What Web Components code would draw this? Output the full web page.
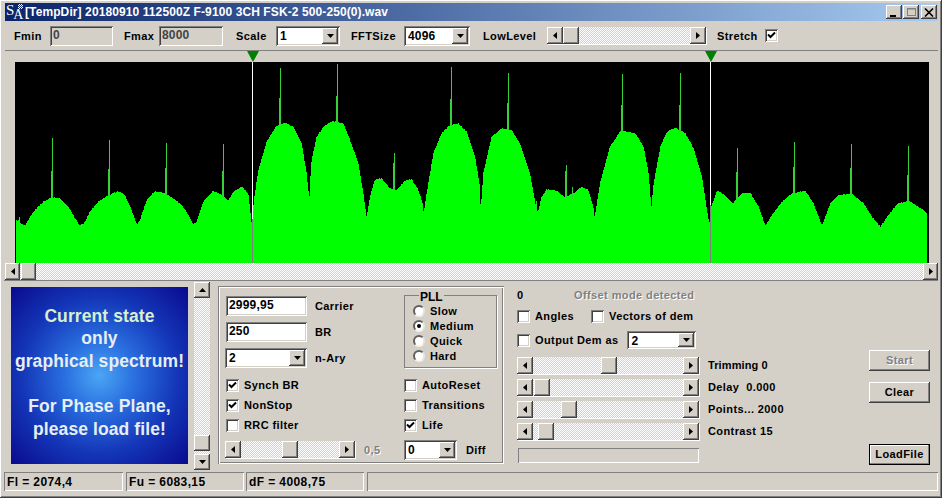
<!DOCTYPE html>
<html><head><meta charset="utf-8"><title>SA</title>
<style>
:root{--face:#d4d0c8;
--raised:inset -1px -1px #404040,inset 1px 1px #fff,inset -2px -2px #808080,inset 2px 2px #d4d0c8;
--sunken:inset 1px 1px #808080,inset -1px -1px #fff,inset 2px 2px #404040,inset -2px -2px #d4d0c8;
--dither:repeating-conic-gradient(#d4d0c8 0 25%,#fff 0 50%) 0 0/2px 2px;}
html,body{margin:0;padding:0;background:var(--face);font:bold 11px "Liberation Sans",Arial,sans-serif;color:#000;letter-spacing:.4px}
</style></head><body>
<ui-window>
  <ui-titlebar>[TempDir] 20180910 112500Z F-9100 3CH FSK-2 500-250(0).wav</ui-titlebar>
  <ui-row style="height:29px;padding-left:9px;border-bottom:1px solid #808080">
    <ui-label style="width:36px">Fmin</ui-label><ui-edit readonly style="width:63px">0</ui-edit>
    <ui-label style="width:35px;margin-left:11px">Fmax</ui-label><ui-edit readonly style="width:64px">8000</ui-edit>
    <ui-label style="width:40px;margin-left:13px">Scale</ui-label><ui-combo style="width:64px">1</ui-combo>
    <ui-label style="width:53px;margin-left:11px">FFTSize</ui-label><ui-combo style="width:66px">4096</ui-combo>
    <ui-label style="width:64px;margin-left:13px">LowLevel</ui-label><ui-scroll thumb="0" style="width:159px"></ui-scroll>
    <ui-label style="width:48px;margin-left:11px">Stretch</ui-label><ui-check checked></ui-check>
  </ui-row>
  <ui-spectrum style="margin-left:10px"></ui-spectrum>
  <ui-scroll thumb="1" plain style="width:933px"></ui-scroll>
  <ui-row style="height:191px;align-items:flex-start;border-top:1px solid #808080;margin-left:-1px;padding-left:1px">
    <ui-banner style="margin:6px 0 0 6px"><span style="color:#d8efd0">Current state</span><br>only<br>graphical spectrum!<br><br>For Phase Plane,<br>please load file!</ui-banner>
    <ui-scroll vertical thumb="137" plain style="margin:1px 0 0 6px;width:16px;height:188px"></ui-scroll>
    <ui-panel style="margin:5px 0 0 8px;width:286px;height:178px">
      <ui-col style="width:179px;padding:10px 0 0 7px;box-sizing:content-box">
        <ui-row style="height:20px"><ui-edit style="width:81px;margin-left:1px">2999,95</ui-edit><ui-label style="margin-left:8px">Carrier</ui-label></ui-row>
        <ui-row style="height:20px;margin-top:6px"><ui-edit style="width:81px;margin-left:1px">250</ui-edit><ui-label style="margin-left:8px">BR</ui-label></ui-row>
        <ui-row style="height:20px;margin-top:6px"><ui-combo style="width:82px">2</ui-combo><ui-label style="margin-left:8px">n-Ary</ui-label></ui-row>
        <ui-check checked style="margin:10px 0 0 1px" label="Synch BR"></ui-check>
        <ui-check checked style="margin:6px 0 0 1px" label="NonStop"></ui-check>
        <ui-check style="margin:6px 0 0 1px" label="RRC filter"></ui-check>
        <ui-row style="height:17px;margin-top:9px"><ui-scroll thumb="41" style="width:130px"></ui-scroll><ui-label muted style="margin-left:9px">0,5</ui-label></ui-row>
      </ui-col>
      <ui-col style="width:93px;padding-top:3px">
        <ui-pll></ui-pll>
        <ui-check style="margin-top:10px" label="AutoReset"></ui-check>
        <ui-check style="margin-top:6px" label="Transitions"></ui-check>
        <ui-check checked style="margin-top:6px" label="Life"></ui-check>
        <ui-row style="height:20px;margin-top:8px"><ui-combo style="width:53px">0</ui-combo><ui-label style="margin-left:9px">Diff</ui-label></ui-row>
      </ui-col>
    </ui-panel>
    <ui-col style="margin-left:13px;width:352px">
      <ui-row style="height:14px;margin-top:7px"><ui-label style="width:57px">0</ui-label><ui-label muted>Offset mode detected</ui-label></ui-row>
      <ui-row style="height:14px;margin-top:7px"><ui-check label="Angles"></ui-check><ui-check style="margin-left:17px" label="Vectors of dem"></ui-check></ui-row>
      <ui-row style="height:18px;margin-top:8px"><ui-check label="Output Dem as"></ui-check><ui-combo style="width:69px;height:18px;margin-left:9px">2</ui-combo></ui-row>
      <ui-row style="height:17px;margin-top:8px"><ui-scroll thumb="68" style="width:182px"></ui-scroll><ui-label style="margin:0 0 2px 9px;letter-spacing:.1px">Trimming 0</ui-label></ui-row>
      <ui-row style="height:17px;margin-top:5px"><ui-scroll thumb="1" style="width:182px"></ui-scroll><ui-label style="margin:0 0 2px 9px">Delay&nbsp; 0.000</ui-label></ui-row>
      <ui-row style="height:17px;margin-top:5px"><ui-scroll thumb="28" style="width:182px"></ui-scroll><ui-label style="margin:0 0 2px 9px">Points... 2000</ui-label></ui-row>
      <ui-row style="height:17px;margin-top:5px"><ui-scroll thumb="5" style="width:182px"></ui-scroll><ui-label style="margin:0 0 2px 9px">Contrast 15</ui-label></ui-row>
      <ui-progress style="margin:8px 0 0 1px"></ui-progress>
    </ui-col>
    <ui-col style="width:61px">
      <ui-button disabled style="margin-top:69px">Start</ui-button>
      <ui-button style="margin-top:11px">Clear</ui-button>
      <ui-button default style="margin-top:41px">LoadFile</ui-button>
    </ui-col>
  </ui-row>
  <ui-row style="height:19px;margin:0 0 0 -1px">
    <ui-status style="width:119px">Fl = 2074,4</ui-status>
    <ui-status style="width:118px;margin-left:3px">Fu = 6083,15</ui-status>
    <ui-status style="width:118px;margin-left:2px">dF = 4008,75</ui-status>
    <ui-status style="width:571px;margin-left:3px"></ui-status>
  </ui-row>
</ui-window>
<script>
function def(name,css,html,init){
  customElements.define(name,class extends HTMLElement{
    constructor(){super();this.attachShadow({mode:'open'}).innerHTML='<style>'+css+'</style>'+(typeof html==='function'?html(this):html);}
    connectedCallback(){
      if(typeof html==='function')this.shadowRoot.innerHTML='<style>'+css+'</style>'+html(this);
      if(init)init(this);
    }
  });
}
const arrow=d=>({
 down:'<svg width="7" height="4" viewBox="0 0 7 4"><path d="M0 0h7L3.5 4z"/></svg>',
 up:'<svg width="7" height="4" viewBox="0 0 7 4"><path d="M0 4h7L3.5 0z"/></svg>',
 left:'<svg width="4" height="7" viewBox="0 0 4 7"><path d="M4 0v7L0 3.500z"/></svg>',
 right:'<svg width="4" height="7" viewBox="0 0 4 7"><path d="M0 0v7L4 3.500z"/></svg>'}[d]);
def('ui-window',':host{display:flex;flex-direction:column;box-sizing:border-box;width:942px;height:498px;padding:3px 4px 0 5px;background:var(--face);box-shadow:var(--raised);overflow:hidden}','<slot></slot>');
def('ui-row',':host{display:flex;align-items:center;flex:none}','<slot></slot>');
def('ui-col',':host{display:flex;flex-direction:column;align-items:flex-start;flex:none}','<slot></slot>');
def('ui-label',':host{display:block;flex:none;white-space:nowrap;line-height:14px}:host([muted]){color:#808080;text-shadow:1px 1px #fff}','<slot></slot>');
def('ui-titlebar',`:host{display:flex;align-items:center;flex:none;height:18px;background:linear-gradient(90deg,#0a246a,#a6caf0);color:#fff;font-size:12px;letter-spacing:.1px;white-space:nowrap}
.ic{display:flex;flex:none;width:17px;height:18px;margin:0 2px 0 1px;font:400 15px/11px "Liberation Serif",serif;letter-spacing:0}
.s{align-self:flex-start;margin-top:2px}.a{align-self:flex-end;margin:0 0 1px -1px;font-size:14px}
.st{flex:none;width:5px;height:5px;margin:1px 0 0 -5px;background:repeating-conic-gradient(#fff 0 25%,#0a246a 0 50%) 0 0/2px 2px}
.t{flex:1}.b{display:flex;align-items:center;justify-content:center;width:16px;height:14px;box-shadow:var(--raised);background:var(--face)}
.bs{display:flex;gap:0;margin-right:1px}.b+.b{margin-left:1px}.b:last-child{margin-left:2px}`,
`<span class="ic"><span class="s">S</span><span class="a">A</span><span class="st"></span></span><span class="t"><slot></slot></span>
<span class="bs"><span class="b"><svg width="10" height="9" viewBox="0 0 10 9"><path d="M1 7h6v2H1z"/></svg></span><span class="b"><svg width="11" height="10" viewBox="0 0 11 10"><path d="M1 1h9v8H1zM2 2.500v5.500h7V2.500z" fill="#808080" fill-rule="evenodd"/></svg></span><span class="b"><svg width="10" height="9" viewBox="0 0 10 9"><path d="M1 0.500l8 8M9 0.500l-8 8" stroke="#000" stroke-width="1.600"/></svg></span></span>`);
def('ui-edit',`:host{display:block;flex:none;box-sizing:border-box;height:20px;padding:2px 3px 0 3px;background:#fff;box-shadow:var(--sunken);font-size:12px;line-height:14px;letter-spacing:.2px}
:host([readonly]){background:var(--face);color:#444}`,'<slot></slot>');
def('ui-combo',`:host{display:flex;flex:none;box-sizing:border-box;height:20px;padding:2px;background:#fff;box-shadow:var(--sunken);font-size:12px;line-height:16px;letter-spacing:.2px}
.v{flex:1;padding-left:2px}.b{display:flex;align-items:center;justify-content:center;width:16px;box-shadow:var(--raised);background:var(--face)}`,
`<span class="v"><slot></slot></span><span class="b">${arrow('down')}</span>`);
def('ui-check',`:host{display:flex;align-items:center;flex:none;height:14px;white-space:nowrap}
.b{display:flex;align-items:center;justify-content:center;flex:none;width:13px;height:13px;background:#fff;box-shadow:var(--sunken)}
.l{margin-left:5px}`,
h=>`<span class="b">${h.hasAttribute('checked')?'<svg width="9" height="9" viewBox="0 0 9 9"><path d="M1 3.500l2.500 2.500L8 1.500" fill="none" stroke="#000" stroke-width="2"/></svg>':''}</span>${h.hasAttribute('label')?`<span class="l">${h.getAttribute('label')}</span>`:''}`);
def('ui-radio',`:host{display:flex;align-items:center;flex:none;height:15px;white-space:nowrap}
.r{display:flex;align-items:center;justify-content:center;width:12px;height:12px;box-sizing:border-box;border-radius:50%;background:#fff;border:2px solid;border-color:#606060 #e8e6e0 #f4f3f0 #606060}
.d{width:4px;height:4px;border-radius:50%;background:#000}.l{margin-left:5px}`,
h=>`<span class="r">${h.hasAttribute('checked')?'<span class="d"></span>':''}</span><span class="l"><slot></slot></span>`);
def('ui-pll',`:host{display:block;flex:none;width:93px}
fieldset{box-sizing:border-box;margin:0;height:79px;padding:2px 0 0 8px;border:1px solid #808080;box-shadow:1px 1px #fff}
legend{padding:0 1px;margin-left:6px;font-size:12px;line-height:12px;letter-spacing:0;transform:translateY(2px)}`,
`<fieldset><legend>PLL</legend><ui-radio>Slow</ui-radio><ui-radio checked>Medium</ui-radio><ui-radio>Quick</ui-radio><ui-radio>Hard</ui-radio></fieldset>`);
def('ui-scroll',`:host{display:flex;flex:none;box-sizing:border-box;height:17px;box-shadow:1px 1px #fff;background:var(--dither)}
:host([plain]){box-shadow:none}
:host([vertical]){flex-direction:column}
.b{display:flex;align-items:center;justify-content:center;flex:none;width:16px;height:100%;box-shadow:var(--raised);background:var(--face)}
:host([plain]) .b,:host([plain]) .th{width:15px}
:host([vertical]) .b{width:100%;height:16px}
.t{flex:1;min-width:0;min-height:0;display:flex}:host([vertical]) .t{flex-direction:column}
.th{flex:none;width:16px;height:100%;box-shadow:var(--raised);background:var(--face)}:host([plain]) .th{width:15px}:host([vertical]) .th{width:100%;height:16px}`,
h=>{const v=h.hasAttribute('vertical'),o=h.getAttribute('thumb')||0;
return `<span class="b">${arrow(v?'up':'left')}</span><span class="t"><span class="th" style="margin-${v?'top':'left'}:${o}px"></span></span><span class="b">${arrow(v?'down':'right')}</span>`});
def('ui-panel',':host{display:flex;flex:none;box-sizing:border-box;box-shadow:inset 1px 1px #808080,inset -1px -1px #fff,inset 2px 2px #fff,inset -2px -2px #808080}','<slot></slot>');
def('ui-banner',`:host{display:flex;align-items:center;justify-content:center;flex:none;width:177px;height:177px;box-sizing:border-box;padding-bottom:6px;text-align:center;background:radial-gradient(circle at 50% 50%,#4aa6f4 0,#2a6fe0 28%,#1436b8 62%,#0a0a8e 100%);color:#e6eef2;font-size:17.500px;line-height:22.600px;letter-spacing:.1px;white-space:nowrap}`,'<div><slot></slot></div>');
def('ui-progress',':host{display:block;flex:none;width:181px;height:15px;box-sizing:border-box;box-shadow:inset 1px 1px #808080,inset -1px -1px #fff}','');
def('ui-button',`:host{display:flex;align-items:center;justify-content:center;flex:none;box-sizing:border-box;width:61px;height:21px;padding-bottom:1px;box-shadow:var(--raised);background:var(--face)}
:host([disabled]){color:#808080;text-shadow:1px 1px #fff}
:host([default]){border:1px solid #000;box-shadow:inset -1px -1px #808080,inset 1px 1px #fff}`,'<slot></slot>');
def('ui-status',':host{display:block;flex:none;box-sizing:border-box;height:19px;padding:3px 0 0 3px;box-shadow:inset 1px 1px #808080,inset -1px -1px #fff;font-size:12px;line-height:15px;white-space:nowrap}','<slot></slot>');
const Z6=[[47,480],[57,482],[58,468],[62,490],[75,497],[100,455],[130,425],[155,412],[180,415],[205,440],[225,475],[238,495],[252,490],[270,455],[295,425],[325,405],[355,394],[375,405],[395,450],[410,492],[418,485],[440,420],[465,393],[495,400],[520,415],[545,435],[565,465],[580,493],[590,485],[610,425],[640,392],[665,405],[685,422],[700,395],[725,380],[745,400],[755,490],[762,420],[775,330],[800,245],[830,197],[855,188],[880,200],[905,250],[920,340],[928,418]];
const Z7=[[0,370],[5,300],[20,230],[45,195],[70,183],[100,190],[120,240],[145,310],[160,400],[170,472],[180,410],[195,358],[215,355],[240,385],[260,390],[285,362],[305,358],[325,390],[338,430],[341,460],[350,400],[370,280],[395,220],[420,195],[445,190],[470,215],[495,290],[510,380],[512,452],[520,340],[545,230],[575,205],[605,210],[630,250],[660,340],[678,440],[684,458],[695,410],[710,388],[740,392],[765,412],[790,400],[815,380],[835,390],[850,440],[854,472],[870,370],[900,260],[930,215]];
const Z8=[[0,212],[40,220],[65,260],[80,340],[88,442],[95,370],[115,260],[135,215],[160,203],[190,220],[215,265],[240,350],[255,450],[262,490],[268,440],[285,392],[305,402],[332,430],[360,400],[385,398],[410,440],[430,497],[450,465],[480,425],[510,400],[550,392],[575,430],[600,497],[625,430],[650,405],[690,402],[725,430],[750,470],[775,500],[800,465],[825,432],[860,422],[905,450],[912,460]];
const pts=[...Z6.map(p=>[p[0]/3,60+p[1]/3]),...Z7.map(p=>[310+p[0]/3,60+p[1]/3]),...Z8.map(p=>[622+p[0]/3,60+p[1]/3])];
function env(x){for(let i=1;i<pts.length;i++){if(x<=pts[i][0]){const a=pts[i-1],b=pts[i];return a[1]+(b[1]-a[1])*(x-a[0])/Math.max(b[0]-a[0],.01);}}return pts[pts.length-1][1];}
const spikes=[[52,138],[109,140],[166,143],[223,144],[280,68],[337,64],[394,153],[451,67],[508,73],[566,165],[622,74],[680,73],[737,148],[794,142],[851,144],[908,146]];
function spectrumSvg(){
  let d='';
  for(let x=16;x<927;x++){const y=Math.round(env(x+.5)+Math.sin(x*2.3)*.3);d+=`M${x} ${y}h1V263h-1z`;}
  let s='';
  for(const [x,t] of spikes){const e=Math.round(env(x+.5));const th=e-26;
    s+=`<path d="M${x} ${t}h1V${e+1}h-1zM${x-1} ${th}h1V${e+1}h-1z"/>`;}
  s+=`<path d="M572 187h1v12h-1zM536 201h1v8h-1z"/>`;
  return `<svg width="914" height="212" viewBox="15 51 914 212" shape-rendering="crispEdges">
  <rect x="15" y="62" width="914" height="201" fill="#000"/>
  <path d="${d}" fill="#00ff00"/><g fill="#38d038">${s}</g>
  <path d="M252 62h1v157h-1zM710 62h1v143h-1z" fill="#fff"/><path d="M252 219h1v44h-1zM710 205h1v58h-1z" fill="#808080"/>
  <g shape-rendering="geometricPrecision" fill="#008000"><path d="M247 51h12l-6 11zM705 51h12l-6 11z"/></g></svg>`;
}
def('ui-spectrum',':host{display:block;flex:none;width:914px;height:212px;line-height:0}svg{display:block}',()=>spectrumSvg());
</script>
</body></html>
